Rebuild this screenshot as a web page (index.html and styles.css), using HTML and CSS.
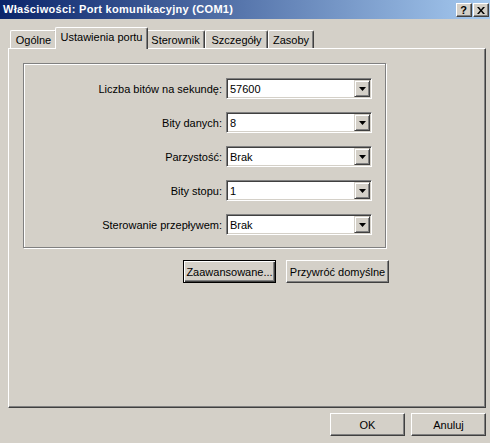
FILE: index.html
```html
<!DOCTYPE html>
<html lang="pl">
<head>
<meta charset="utf-8">
<title>Właściwości: Port komunikacyjny (COM1)</title>
<link rel="stylesheet" href="styles.css">
</head>
<body>
<div class="window">
  <div class="titlebar">
    <span class="title">Właściwości: Port komunikacyjny (COM1)</span>
    <div class="caption-btns">
      <span class="cbtn help">?</span>
      <span class="cbtn close">
        <svg width="8" height="7" viewBox="0 0 8 7"><path d="M0 0h2l2 2.5L6 0h2L5 3.5 8 7H6L4 4.5 2 7H0l3-3.5z" fill="#000"/></svg>
      </span>
    </div>
  </div>
  <div class="content">
    <div class="tabs">
      <div class="tab t-ogolne">Ogólne</div>
      <div class="tab selected t-port">Ustawienia portu</div>
      <div class="tab t-sterownik">Sterownik</div>
      <div class="tab t-szczegoly">Szczegóły</div>
      <div class="tab t-zasoby">Zasoby</div>
    </div>
    <div class="panel">
      <div class="group">
        <label class="lbl">Liczba bitów na sekundę:</label>
        <div class="combo"><span class="val">57600</span><span class="drop"><svg width="7" height="4" viewBox="0 0 7 4"><path d="M0 0h7L3.5 4z" fill="#000"/></svg></span></div>
        <label class="lbl">Bity danych:</label>
        <div class="combo"><span class="val">8</span><span class="drop"><svg width="7" height="4" viewBox="0 0 7 4"><path d="M0 0h7L3.5 4z" fill="#000"/></svg></span></div>
        <label class="lbl">Parzystość:</label>
        <div class="combo"><span class="val">Brak</span><span class="drop"><svg width="7" height="4" viewBox="0 0 7 4"><path d="M0 0h7L3.5 4z" fill="#000"/></svg></span></div>
        <label class="lbl">Bity stopu:</label>
        <div class="combo"><span class="val">1</span><span class="drop"><svg width="7" height="4" viewBox="0 0 7 4"><path d="M0 0h7L3.5 4z" fill="#000"/></svg></span></div>
        <label class="lbl">Sterowanie przepływem:</label>
        <div class="combo"><span class="val">Brak</span><span class="drop"><svg width="7" height="4" viewBox="0 0 7 4"><path d="M0 0h7L3.5 4z" fill="#000"/></svg></span></div>
      </div>
      <div class="group-actions">
        <button class="btn default b-adv">Zaawansowane...</button>
        <button class="btn b-reset">Przywróć domyślne</button>
      </div>
    </div>
    <div class="dialog-actions">
      <button class="btn b-dlg">OK</button>
      <button class="btn b-dlg">Anuluj</button>
    </div>
  </div>
</div>
</body>
</html>
```

FILE: styles.css
```css
* { box-sizing: border-box; }
html, body {
  margin: 0;
  padding: 0;
}
body {
  width: 490px;
  height: 443px;
  overflow: hidden;
  background: #d4d0c8;
  font-family: "Liberation Sans", Arial, sans-serif;
  font-size: 11px;
  color: #000;
}
.window {
  width: 490px;
  height: 443px;
  display: flex;
  flex-direction: column;
}
.titlebar {
  height: 19px;
  flex: none;
  display: flex;
  align-items: flex-start;
  background: linear-gradient(to right, #0a246a 0%, #a6caf0 100%);
}
.title {
  color: #fff;
  font-weight: bold;
  font-size: 11px;
  letter-spacing: 0.3px;
  line-height: 19px;
  padding-left: 3px;
  white-space: nowrap;
  flex: 1;
}
.caption-btns {
  display: flex;
  gap: 1px;
  margin-top: 3px;
  margin-right: 1px;
}
.cbtn {
  width: 16px;
  height: 14px;
  background: #d4d0c8;
  border-top: 1px solid #fff;
  border-left: 1px solid #fff;
  border-right: 1px solid #404040;
  border-bottom: 1px solid #404040;
  box-shadow: inset -1px -1px #808080;
  display: flex;
  align-items: center;
  justify-content: center;
}
.help {
  font-weight: bold;
  font-size: 11px;
  line-height: 12px;
  padding-right: 1px;
}
.close svg { display: block; margin-right: 1px; }

.content {
  flex: 1;
  padding: 8px 4px 0 8px;
  display: flex;
  flex-direction: column;
}
.tabs {
  height: 21px;
  display: flex;
  align-items: flex-end;
  padding-left: 2px;
  position: relative;
  z-index: 1;
}
.tab {
  height: 18px;
  border-top: 1px solid #fff;
  border-left: 1px solid #fff;
  border-right: 1px solid #404040;
  box-shadow: inset -1px 0 #808080;
  border-radius: 2px 2px 0 0;
  background: #d4d0c8;
  display: flex;
  align-items: center;
  justify-content: center;
  white-space: nowrap;
  padding-top: 1px;
}
.t-ogolne { width: 47px; }
.t-port { width: 93px; }
.t-sterownik { width: 59px; }
.t-szczegoly { width: 63px; }
.t-zasoby { width: 46px; }
.tab.selected {
  height: 22px;
  margin: 0 -2px -1px -2px;
  position: relative;
  z-index: 2;
  padding-top: 0;
  padding-bottom: 3px;
}
.panel {
  width: 478px;
  height: 360px;
  flex: none;
  border-top: 1px solid #fff;
  border-left: 1px solid #fff;
  border-right: 1px solid #404040;
  border-bottom: 1px solid #404040;
  box-shadow: inset -1px -1px #808080;
  padding: 14px 0 0 14px;
}
.group {
  width: 363px;
  height: 185px;
  border: 1px solid #808080;
  box-shadow: inset 1px 1px #fff, 1px 1px #fff;
  display: grid;
  grid-template-columns: 198px 146px;
  grid-auto-rows: 21px;
  column-gap: 4px;
  row-gap: 13px;
  padding-top: 14px;
}
.lbl {
  display: flex;
  align-items: center;
  justify-content: flex-end;
  white-space: nowrap;
  padding-top: 1px;
}
.combo {
  height: 21px;
  background: #fff;
  border: 1px solid;
  border-color: #808080 #fff #fff #808080;
  box-shadow: inset 1px 1px #404040, inset -1px -1px #d4d0c8;
  display: flex;
  align-items: stretch;
  padding: 2px;
}
.val {
  flex: 1;
  display: flex;
  align-items: center;
  padding-left: 1px;
}
.drop {
  width: 16px;
  height: 17px;
  margin-top: -1px;
  margin-right: -1px;
  background: #d4d0c8;
  border-top: 1px solid #d4d0c8;
  border-left: 1px solid #d4d0c8;
  border-right: 1px solid #404040;
  border-bottom: 1px solid #404040;
  box-shadow: inset 1px 1px #fff, inset -1px -1px #808080;
  display: flex;
  align-items: center;
  justify-content: center;
}
.drop svg { display: block; }

.group-actions {
  width: 366px;
  display: flex;
  justify-content: flex-end;
  gap: 10px;
  margin-top: 12px;
}
.btn {
  font-family: "Liberation Sans", Arial, sans-serif;
  font-size: 11px;
  color: #000;
  height: 23px;
  background: #d4d0c8;
  border-top: 1px solid #fff;
  border-left: 1px solid #fff;
  border-right: 1px solid #404040;
  border-bottom: 1px solid #404040;
  box-shadow: inset -1px -1px #808080;
  padding: 0;
  margin: 0;
  white-space: nowrap;
}
.btn.default {
  border: 1px solid #000;
  box-shadow: inset 1px 1px #fff, inset -1px -1px #404040, inset -2px -2px #808080;
}
.b-adv { width: 93px; }
.b-reset { width: 103px; }
.dialog-actions {
  width: 478px;
  display: flex;
  justify-content: flex-end;
  gap: 6px;
  margin-top: 5px;
}
.b-dlg { width: 75px; }
```
